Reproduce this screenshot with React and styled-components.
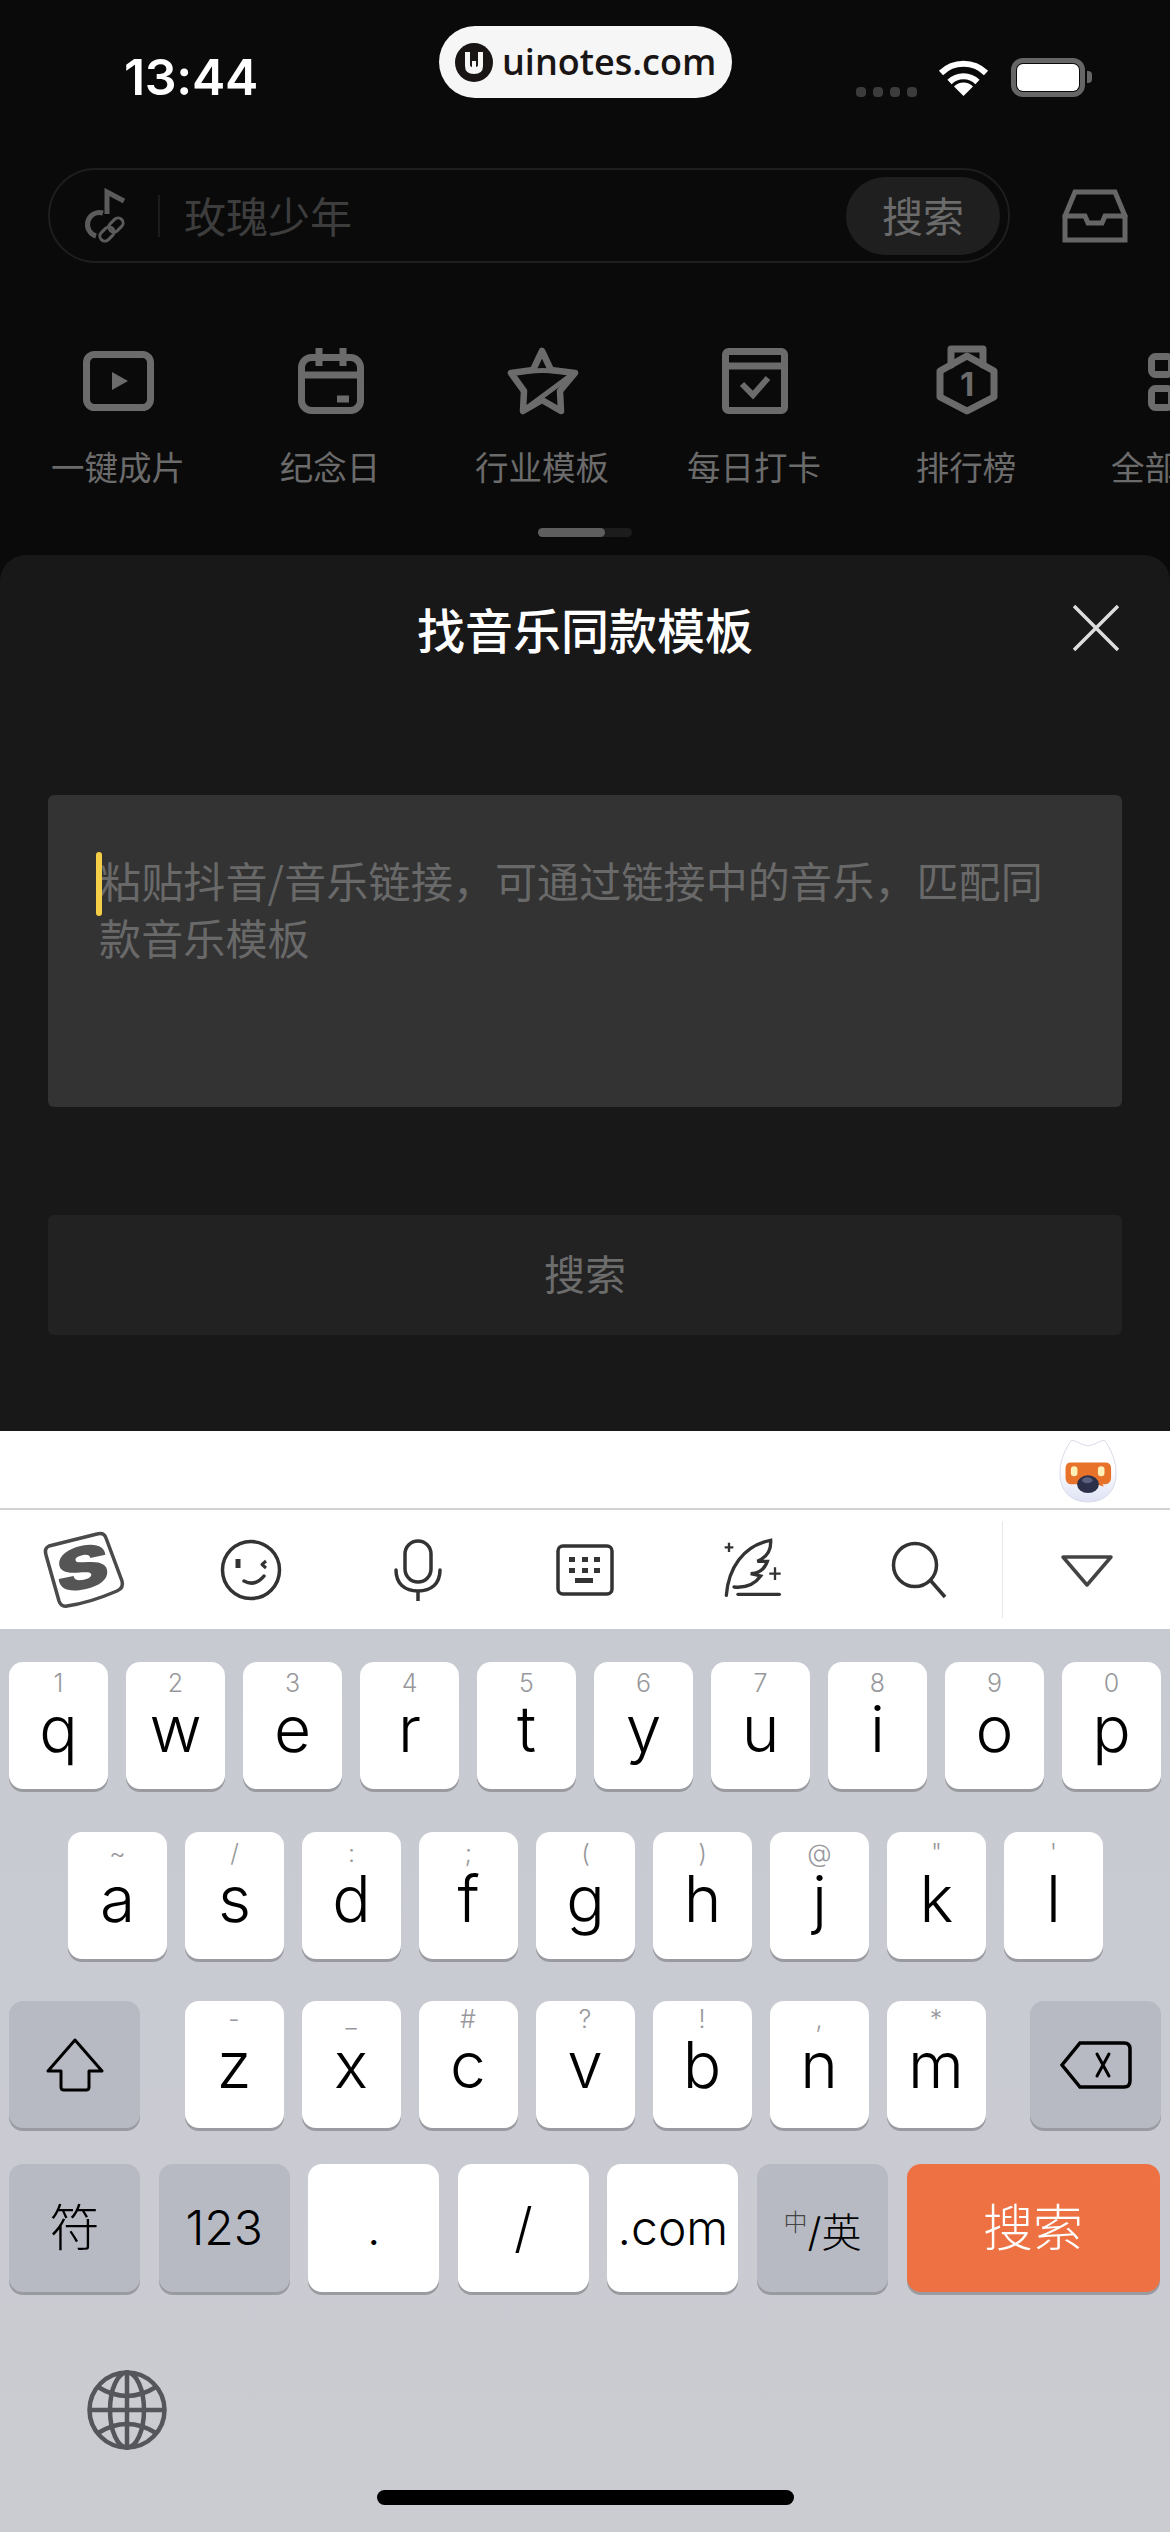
import React from "react";
import styled, { createGlobalStyle } from "styled-components";

const CJK = `"Noto Sans CJK SC", "Noto Sans", sans-serif`;
const LATIN = `Inter, "Noto Sans CJK SC", sans-serif`;

const Global = createGlobalStyle`
  html, body { margin: 0; padding: 0; background: #0a0a0a; }
  * { box-sizing: border-box; }
`;

const Page = styled.div`
  position: relative;
  width: 1170px;
  height: 2532px;
  overflow: hidden;
  background: #0a0a0a;
  font-family: ${CJK};
`;

const StatusBar = styled.div`
  display: flex;
  align-items: center;
  justify-content: space-between;
  height: 154px;
  padding: 0 78px 0 124px;
  margin-bottom: 14px;
`;

const Time = styled.div`
  font-family: ${LATIN};
  font-size: 50px;
  font-weight: 600;
  color: #fff;
  letter-spacing: -0.3px;
`;

const StatusIcons = styled.div`
  display: flex;
  align-items: center;
  height: 40px;
`;

const SignalDots = styled.div`
  display: flex;
  gap: 7px;
  align-self: flex-end;
  margin-right: 21px;
`;

const SignalDot = styled.span`
  width: 10px;
  height: 10px;
  border-radius: 4px;
  background: #3c3c3c;
`;

const Battery = styled.div`
  display: flex;
  align-items: center;
  margin-left: 22px;
`;

const BatteryBody = styled.div`
  width: 74px;
  height: 39px;
  border: 5px solid #666;
  border-radius: 12px;
  padding: 1px;
`;

const BatteryFill = styled.div`
  width: 100%;
  height: 100%;
  background: #fff;
  border-radius: 6px;
`;

const BatteryNub = styled.div`
  width: 5px;
  height: 12px;
  margin-left: 2px;
  background: #666;
  border-radius: 0 4px 4px 0;
`;

const UrlPill = styled.div`
  position: absolute;
  top: 26px;
  left: 439px;
  width: 293px;
  height: 72px;
  display: flex;
  align-items: center;
  gap: 9px;
  padding-left: 16px;
  border-radius: 36px;
  background: #f6f6f6;
  color: #1a1515;
  font-family: "Open Sans", sans-serif;
  font-size: 36px;
  font-weight: 600;
  line-height: 68px;
`;

const SearchRow = styled.div`
  display: flex;
  align-items: center;
  justify-content: space-between;
  padding: 0 42px 0 48px;
`;

const SearchBar = styled.div`
  display: flex;
  align-items: center;
  width: 962px;
  height: 95px;
  padding: 0 8px 0 32px;
  border: 2px solid #1e1e1e;
  border-radius: 48px;
`;

const BarDivider = styled.div`
  width: 2px;
  height: 42px;
  margin: 0 24px 0 32px;
  background: #1c1c1c;
`;

const SearchHint = styled.div`
  flex: 1;
  padding-bottom: 3px;
  font-size: 42px;
  color: #3d3d3d;
`;

const SearchButton = styled.div`
  display: flex;
  align-items: center;
  justify-content: center;
  width: 154px;
  height: 78px;
  padding-bottom: 3px;
  border-radius: 39px;
  background: #1f1f1f;
  font-size: 41px;
  color: #6b6b6b;
`;

const Shortcuts = styled.div`
  display: flex;
  margin-top: 80px;
  padding-left: 12px;
`;

const Shortcut = styled.div`
  flex: 0 0 212px;
  display: flex;
  flex-direction: column;
  align-items: center;
`;

const ShortcutLabel = styled.div`
  margin: 25px 0 2px;
  font-size: 33.5px;
  line-height: 44px;
  white-space: nowrap;
  color: #6b6b6b;
`;

const ScrollTrack = styled.div`
  width: 94px;
  height: 9px;
  margin: 38px auto 18px;
  border-radius: 5px;
  background: #1c1c1c;
`;

const ScrollThumb = styled.div`
  width: 67px;
  height: 100%;
  border-radius: 5px;
  background: #5e5e5e;
`;

const Sheet = styled.div`
  height: 876px;
  padding: 39px 48px 0;
  border-radius: 26px 26px 0 0;
  background: #181818;
`;

const SheetHeader = styled.div`
  display: grid;
  grid-template-columns: 1fr auto 1fr;
  align-items: center;
  height: 67px;
`;

const SheetTitle = styled.div`
  font-size: 48px;
  line-height: 64px;
  font-weight: 500;
  color: #fff;
`;

const CloseIcon = styled.svg`
  justify-self: end;
  margin-right: 3px;
  width: 46px;
  height: 46px;
`;

const InputBox = styled.div`
  position: relative;
  height: 312px;
  margin-top: 134px;
  padding: 56px 70px 0 51px;
  border-radius: 6px;
  background: #333;
  font-size: 42px;
  line-height: 57px;
  letter-spacing: 0.15px;
  color: #696969;
`;

const Caret = styled.div`
  position: absolute;
  left: 48px;
  top: 57px;
  width: 6px;
  height: 64px;
  border-radius: 3px;
  background: #f5cf47;
`;

const SubmitButton = styled.div`
  display: flex;
  align-items: center;
  justify-content: center;
  height: 120px;
  margin-top: 108px;
  padding-bottom: 6px;
  border-radius: 6px;
  background: #222;
  font-size: 41px;
  color: #6c6c6c;
`;

const SuggestBar = styled.div`
  display: flex;
  align-items: center;
  justify-content: flex-end;
  height: 79px;
  padding-right: 52px;
  background: #fff;
  border-bottom: 2px solid #d2d2d4;
`;

const ToolBar = styled.div`
  display: flex;
  align-items: center;
  height: 119px;
  background: #fff;
`;

const Tool = styled.div`
  flex: 0 0 167px;
  display: flex;
  align-items: center;
  justify-content: center;
`;

const ToolDivider = styled.div`
  width: 1px;
  height: 97px;
  background: #e6e6e6;
`;

const KeyArea = styled.div`
  height: 903px;
  padding-top: 33px;
  background: linear-gradient(#c8cad2, #cbccd2);
`;

const KeyRow = styled.div`
  display: flex;
  gap: ${(p) => p.$gap || 18}px;
  margin-top: ${(p) => p.$top || 0}px;
  padding: 0 9px 0 ${(p) => p.$left || 9}px;
  justify-content: ${(p) => p.$justify || "flex-start"};
`;

const InnerRow = styled.div`
  display: flex;
  gap: 18px;
`;

const keyColors = { light: "#fff", dark: "#b7bac3", orange: "#ed7142" };

const Key = styled.div`
  flex: 0 0 ${(p) => p.$w || 99}px;
  height: ${(p) => p.$h || 127}px;
  display: flex;
  flex-direction: column;
  align-items: center;
  justify-content: ${(p) => (p.$center ? "center" : "flex-start")};
  padding-top: ${(p) => p.$pad || 0}px;
  border-radius: 14px;
  background: ${(p) => keyColors[p.$kind || "light"]};
  box-shadow: 0 3px 0 #9a9ba1;
  color: #000;
  font-family: ${LATIN};
  font-weight: 300;
`;

const Hint = styled.div`
  height: 26px;
  font-size: 25px;
  line-height: 30px;
  color: #98989c;
`;

const Letter = styled.div`
  font-size: 64px;
  line-height: 70px;
`;

const KeyText = styled.div`
  font-size: ${(p) => p.$size || 48}px;
  line-height: 60px;
  color: ${(p) => p.$color || "#000"};
  white-space: nowrap;
`;

const SmallChar = styled.span`
  font-size: 24px;
  color: #444;
  vertical-align: 16px;
`;

const GlobeRow = styled.div`
  margin-top: 78px;
  padding-left: 87px;
  display: flex;
`;

const HomeBar = styled.div`
  width: 417px;
  height: 15px;
  margin: 40px auto 0;
  border-radius: 8px;
  background: #000;
`;

const Stroke = ({ w = 76, h = 76, box, color = "#6b6b6b", sw = 7, children }) => (
  <svg
    width={w}
    height={h}
    viewBox={box || `0 0 ${w} ${h}`}
    fill="none"
    stroke={color}
    strokeWidth={sw}
    strokeLinecap="round"
    strokeLinejoin="round"
  >
    {children}
  </svg>
);

const shortcutIcons = {
  play: (
    <Stroke>
      <rect x="6.5" y="11.5" width="64" height="53" rx="8" />
      <path d="M32 29l16 9-16 9z" fill="#6b6b6b" stroke="none" />
    </Stroke>
  ),
  calendar: (
    <Stroke>
      <rect x="9.5" y="14.5" width="59" height="53" rx="10" />
      <path d="M9.5 32h59" />
      <path d="M27 5v18M51 5v18" strokeLinecap="butt" />
      <path d="M45 56h12" strokeLinecap="butt" />
    </Stroke>
  ),
  star: (
    <Stroke sw={6.5}>
      <path d="M38 8l9 19 24 3-15 18 1 20-19-11-19 11 1-20L7 30l22-3z" />
      <path d="M8 30q30-5 62 0L20 67" strokeWidth="5" />
    </Stroke>
  ),
  check: (
    <Stroke>
      <rect x="9.5" y="8.5" width="59" height="59" rx="3" />
      <path d="M9.5 23h59" />
      <path d="M26 41l11 11 15-17" strokeWidth="6" strokeLinecap="butt" strokeLinejoin="miter" />
    </Stroke>
  ),
  medal: (
    <Stroke>
      <path d="M23 22V6h32v16" />
      <path d="M39 13l27 15v26L39 68 12 54V28z" />
      <text x="39" y="53" textAnchor="middle" fontSize="33" fontWeight="700" fontFamily="Inter, sans-serif" fill="#6b6b6b" stroke="none">1</text>
    </Stroke>
  ),
  grid: (
    <Stroke>
      <rect x="11.5" y="13.5" width="20" height="18" rx="4" />
      <rect x="11.5" y="45.5" width="20" height="19" rx="4" />
      <rect x="45.5" y="13.5" width="20" height="18" rx="4" />
      <rect x="45.5" y="45.5" width="20" height="19" rx="4" />
    </Stroke>
  ),
};

const shortcuts = [
  ["play", "一键成片"],
  ["calendar", "纪念日"],
  ["star", "行业模板"],
  ["check", "每日打卡"],
  ["medal", "排行榜"],
  ["grid", "全部模板"],
];

const row1 = [["1", "q"], ["2", "w"], ["3", "e"], ["4", "r"], ["5", "t"], ["6", "y"], ["7", "u"], ["8", "i"], ["9", "o"], ["0", "p"]];
const row2 = [["~", "a"], ["/", "s"], [":", "d"], [";", "f"], ["(", "g"], [")", "h"], ["@", "j"], ['"', "k"], ["'", "l"]];
const row3 = [["-", "z"], ["_", "x"], ["#", "c"], ["?", "v"], ["!", "b"], [",", "n"], ["*", "m"]];

const UiLogo = () => (
  <svg width="38" height="39" viewBox="0 0 38 39">
    <ellipse cx="19" cy="19.5" rx="19" ry="19.5" fill="#1a1515" />
    <path d="M10 9h5v13q0 2 2 2v-6h4v6q2 0 2-2V9h5v14q0 8-9 8t-9-8z" fill="#f6f6f6" />
  </svg>
);

const Wifi = () => (
  <svg width="51" height="37" viewBox="0 0 51 37" fill="none" stroke="#fff" strokeWidth="6">
    <path d="M3 14a32 32 0 0 1 45 0" />
    <path d="M11.5 23a20 20 0 0 1 28 0" />
    <path d="M25.5 37l-9.5-9.5a13.5 13.5 0 0 1 19 0z" fill="#fff" stroke="none" />
  </svg>
);

const MusicLink = () => (
  <Stroke w={44} h={56} color="#5b5b5b" sw={5}>
    <path d="M25 26V4l17 9" strokeLinecap="butt" strokeLinejoin="miter" />
    <path d="M21 25a12 12 0 1 0-7 23" strokeLinecap="butt" />
    <rect x="17" y="41" width="16" height="10" rx="5" transform="rotate(-45 25 46)" strokeWidth="3" />
    <rect x="26" y="32" width="16" height="10" rx="5" transform="rotate(-45 34 37)" strokeWidth="3" />
  </Stroke>
);

const Inbox = () => (
  <Stroke w={66} h={54} color="#666" sw={5}>
    <path d="M13 3h40l10 24v24H3V27z" strokeLinejoin="miter" />
    <path d="M3 27h20l3 7h14l3-7h20" strokeLinejoin="miter" />
  </Stroke>
);

const Mascot = () => (
  <svg width="60" height="66" viewBox="50 15 180 200">
    <defs>
      <linearGradient id="egg" x1="0" y1="0" x2="0" y2="1">
        <stop offset="0.45" stopColor="#fff" />
        <stop offset="1" stopColor="#dde1f4" />
      </linearGradient>
    </defs>
    <path d="M140 42c22-3 35-17 50-17 22 30 35 65 35 100 0 55-35 87-85 87s-85-32-85-87c0-35 13-70 35-100 15 0 28 14 50 17z" fill="url(#egg)" stroke="#d8dbe8" strokeWidth="3" />
    <path d="M88 92h104q18 0 18 18v28q0 20-18 20h-8l4 8-22-8H88q-16 0-16-20v-28q0-18 16-18z" fill="#e8722a" />
    <rect x="88" y="104" width="20" height="30" rx="10" fill="#fff0b8" />
    <rect x="170" y="104" width="20" height="30" rx="10" fill="#fff0b8" />
    <ellipse cx="140" cy="158" rx="33" ry="27" fill="#2c3049" />
    <ellipse cx="138" cy="146" rx="16" ry="9" fill="#5c6180" />
  </svg>
);

const SogouLogo = () => (
  <svg width="90" height="90" viewBox="0 0 90 90">
    <path d="M10 21l48-12q7-2 9 4l16 43q2 7-5 10-28 12-50 15-6 1-8-5L7 30q-2-7 3-9z" fill="#fff" stroke="#4a4a4a" strokeWidth="3.5" />
    <text
      x="0"
      y="0"
      transform="translate(45 64) rotate(-12) skewX(-8) scale(1.4 1)"
      textAnchor="middle"
      fontFamily="Inter, sans-serif"
      fontWeight="900"
      fontSize="58"
      fill="#555"
    >
      S
    </text>
  </svg>
);

const Smile = () => (
  <Stroke w={62} h={62} color="#333" sw={3.5}>
    <circle cx="31" cy="31" r="28.5" />
    <path d="M18 20v9" strokeWidth="5" strokeLinecap="butt" />
    <path d="M46 22l-4 3.5 4 3.5" strokeWidth="3" strokeLinecap="butt" />
    <path d="M24 42q11 6 20-5" />
  </Stroke>
);

const Mic = () => (
  <Stroke w={48} h={62} color="#333" sw={3.5}>
    <rect x="11" y="2" width="26" height="41" rx="13" />
    <path d="M2 31c0 14 9 21 22 21s22-7 22-21" />
    <path d="M24 52v10" strokeLinecap="butt" />
  </Stroke>
);

const KeyboardGlyph = () => (
  <Stroke w={58} h={52} color="#333" sw={3.5}>
    <rect x="2" y="2" width="54" height="48" rx="5" />
    <g fill="#333" stroke="none">
      <rect x="13" y="13" width="6" height="5" />
      <rect x="26" y="13" width="6" height="5" />
      <rect x="38" y="13" width="6" height="5" />
      <rect x="13" y="24" width="6" height="5" />
      <rect x="26" y="24" width="6" height="5" />
      <rect x="38" y="24" width="6" height="5" />
      <rect x="19" y="34" width="18" height="5" />
    </g>
  </Stroke>
);

const Quill = () => (
  <Stroke w={66} h={66} box="535 55 198 198" color="#333" sw={10}>
    <path d="M557 230c6-80 50-150 133-165 2 30-10 50-40 63h30c-10 27-30 37-50 37l30 7c-20 28-50 36-80 33" strokeLinejoin="miter" />
    <path d="M592 227h124" />
    <path d="M565 72v28M552 86h26M703 146v38M686 165h34" strokeWidth="7" strokeLinecap="butt" />
  </Stroke>
);

const SearchGlyph = () => (
  <Stroke w={60} h={60} color="#333" sw={3.5}>
    <circle cx="26" cy="25" r="21.5" />
    <path d="M42 41l14 16" strokeLinecap="butt" />
  </Stroke>
);

const Collapse = () => (
  <Stroke w={60} h={60} color="#444" sw={3.5}>
    <path d="M6 17h48L30 45z" />
  </Stroke>
);

const Shift = () => (
  <Stroke w={58} h={54} color="#000" sw={3}>
    <path d="M29 2l27 31H43v16q0 3-3 3H18q-3 0-3-3V33H2z" />
  </Stroke>
);

const Backspace = () => (
  <Stroke w={72} h={48} color="#000" sw={3.5}>
    <path d="M20 2h44q6 0 6 6v32q0 6-6 6H20L2 24z" strokeLinejoin="miter" />
    <path d="M37 13l12 22M49 13L37 35" strokeWidth="3" />
  </Stroke>
);

const Globe = () => (
  <Stroke w={80} h={80} color="#54565c" sw={4.5}>
    <circle cx="40" cy="40" r="37.5" />
    <ellipse cx="40" cy="40" rx="17" ry="37.5" />
    <path d="M40 2v76M3 40h74" />
    <path d="M11 17q29 18 58 0M11 63q29-18 58 0" />
  </Stroke>
);

const App = () => (
  <Page>
    <Global />
    <StatusBar>
      <Time>13:44</Time>
      <StatusIcons>
        <SignalDots>
          <SignalDot />
          <SignalDot />
          <SignalDot />
          <SignalDot />
        </SignalDots>
        <Wifi />
        <Battery>
          <BatteryBody>
            <BatteryFill />
          </BatteryBody>
          <BatteryNub />
        </Battery>
      </StatusIcons>
    </StatusBar>
    <UrlPill>
      <UiLogo />
      uinotes.com
    </UrlPill>

    <SearchRow>
      <SearchBar>
        <MusicLink />
        <BarDivider />
        <SearchHint>玫瑰少年</SearchHint>
        <SearchButton>搜索</SearchButton>
      </SearchBar>
      <Inbox />
    </SearchRow>

    <Shortcuts>
      {shortcuts.map(([icon, label]) => (
        <Shortcut key={icon}>
          {shortcutIcons[icon]}
          <ShortcutLabel>{label}</ShortcutLabel>
        </Shortcut>
      ))}
    </Shortcuts>
    <ScrollTrack>
      <ScrollThumb />
    </ScrollTrack>

    <Sheet>
      <SheetHeader>
        <span />
        <SheetTitle>找音乐同款模板</SheetTitle>
        <CloseIcon viewBox="0 0 46 46" fill="none" stroke="#ddd" strokeWidth="3.5">
          <path d="M1 1l44 44M45 1L1 45" />
        </CloseIcon>
      </SheetHeader>
      <InputBox>
        <Caret />
        粘贴抖音/音乐链接，可通过链接中的音乐，匹配同款音乐模板
      </InputBox>
      <SubmitButton>搜索</SubmitButton>
    </Sheet>

    <SuggestBar>
      <Mascot />
    </SuggestBar>
    <ToolBar>
      <Tool><SogouLogo /></Tool>
      <Tool><Smile /></Tool>
      <Tool><Mic /></Tool>
      <Tool><KeyboardGlyph /></Tool>
      <Tool><Quill /></Tool>
      <Tool><SearchGlyph /></Tool>
      <ToolDivider />
      <Tool><Collapse /></Tool>
    </ToolBar>

    <KeyArea>
      <KeyRow>
        {row1.map(([hint, letter]) => (
          <Key key={letter} $pad={6}>
            <Hint>{hint}</Hint>
            <Letter>{letter}</Letter>
          </Key>
        ))}
      </KeyRow>
      <KeyRow $top={43} $left={68}>
        {row2.map(([hint, letter]) => (
          <Key key={letter} $pad={6}>
            <Hint>{hint}</Hint>
            <Letter>{letter}</Letter>
          </Key>
        ))}
      </KeyRow>
      <KeyRow $top={42} $justify="space-between">
        <Key $kind="dark" $w={131} $center><Shift /></Key>
        <InnerRow>
          {row3.map(([hint, letter]) => (
            <Key key={letter} $pad={3}>
              <Hint>{hint}</Hint>
              <Letter>{letter}</Letter>
            </Key>
          ))}
        </InnerRow>
        <Key $kind="dark" $w={131} $center><Backspace /></Key>
      </KeyRow>
      <KeyRow $top={36} $gap={18.6}>
        <Key $kind="dark" $w={131} $h={128} $center><KeyText $size={50}>符</KeyText></Key>
        <Key $kind="dark" $w={131} $h={128} $center><KeyText $size={48}>123</KeyText></Key>
        <Key $w={131} $h={128} $center><KeyText $size={48}>.</KeyText></Key>
        <Key $w={131} $h={128} $center><KeyText $size={54}>/</KeyText></Key>
        <Key $w={131} $h={128} $center><KeyText $size={48}>.com</KeyText></Key>
        <Key $kind="dark" $w={131} $h={128} $center>
          <KeyText $size={40}><SmallChar>中</SmallChar>/英</KeyText>
        </Key>
        <Key $kind="orange" $w={253} $h={128} $center><KeyText $size={50} $color="#fff">搜索</KeyText></Key>
      </KeyRow>
      <GlobeRow>
        <Globe />
      </GlobeRow>
      <HomeBar />
    </KeyArea>
  </Page>
);

export default App;
